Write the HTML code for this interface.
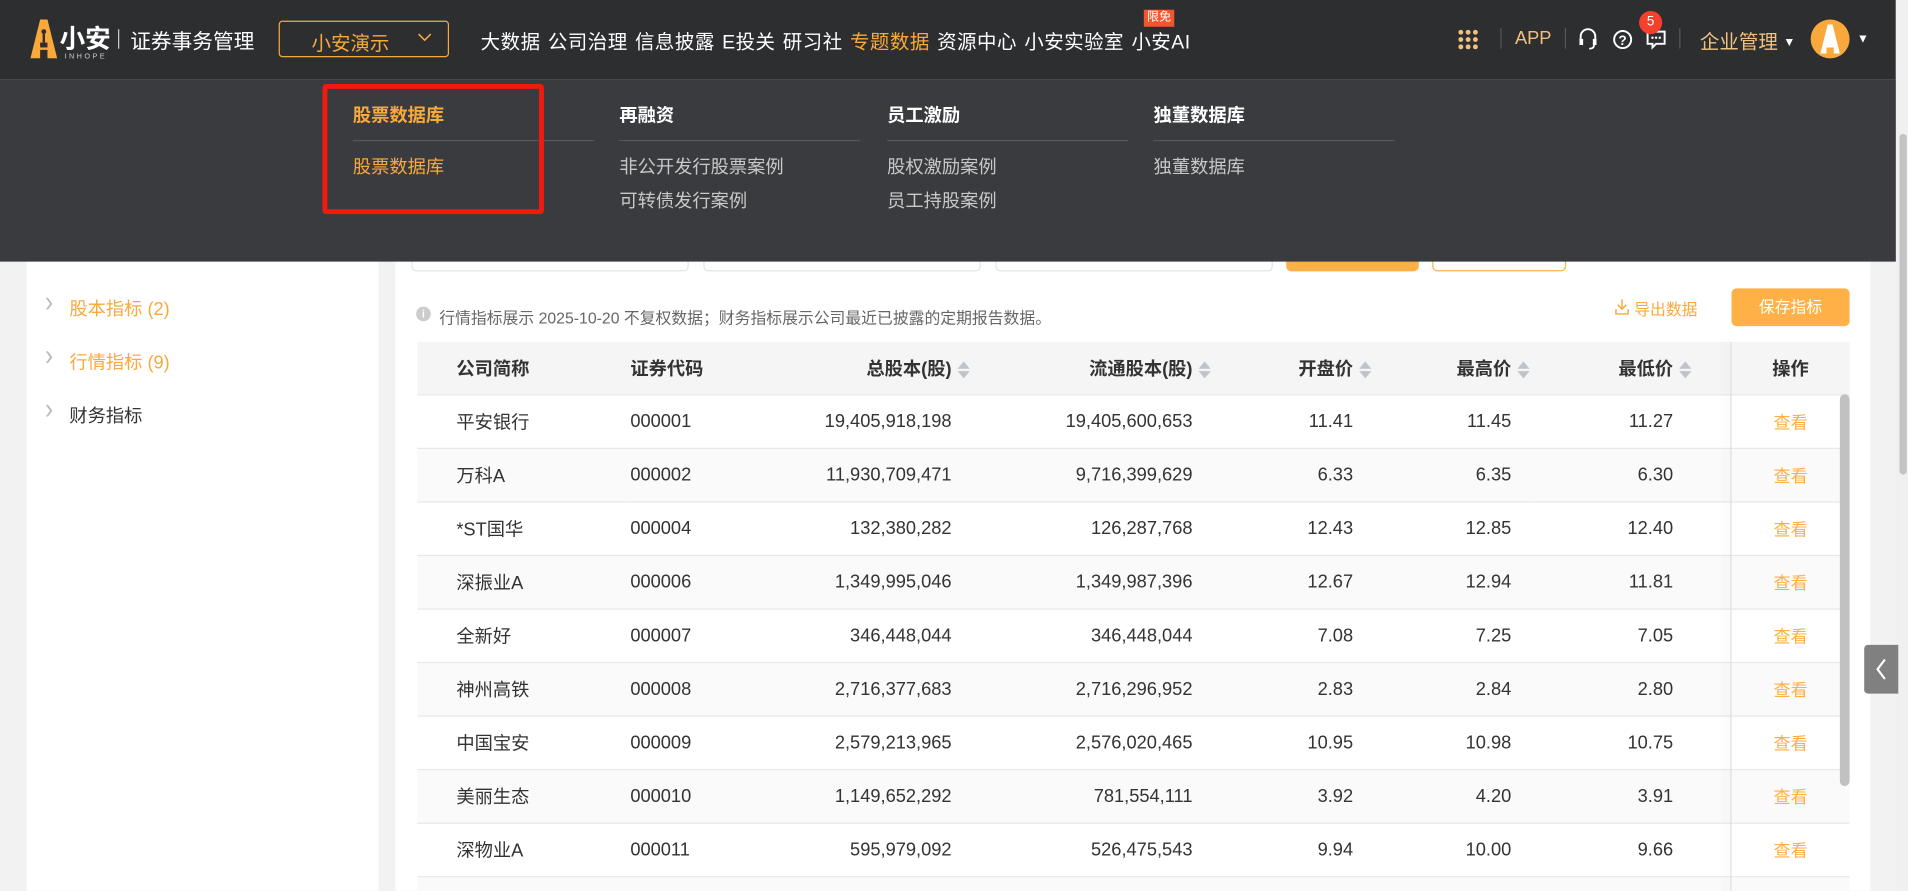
<!DOCTYPE html>
<html><head><meta charset="utf-8">
<style>
html,body{margin:0;padding:0;width:1908px;height:891px;overflow:hidden;background:#f2f2f2;}
#w{position:absolute;left:0;top:0;width:1568px;height:732px;transform:scale(1.216837);transform-origin:0 0;font-family:"Liberation Sans","Noto Sans CJK SC",sans-serif;background:#f2f2f2;overflow:hidden;}
.a{position:absolute;white-space:nowrap;}
.nav{left:0;top:0;width:1558px;height:65px;background:#2d2e30;}
.menu span{margin-right:6px;}
.drop{left:0;top:65px;width:1558px;height:150px;background:#3a3b3f;}
.dh{font-size:15px;font-weight:bold;color:#fff;}
.di{font-size:15px;color:#c8c8c8;}
.ln{height:1px;background:#55565a;width:198px;}
table{border-collapse:collapse;font-size:15px;color:#333;table-layout:fixed;}
td,th{height:43px;padding:0;border-bottom:1px solid #e8e8e8;}
th{font-weight:bold;background:#f5f5f5;}
th.r{padding-right:3px;}
td.r{padding-right:18px;}
tr:nth-child(odd) td{background:#fafafa;}
.sort{display:inline-block;vertical-align:middle;margin-left:5px;width:10px;height:16px;position:relative;}
.sort:before{content:"";position:absolute;left:0;top:1px;border-left:5px solid transparent;border-right:5px solid transparent;border-bottom:6px solid #bfc3cb;}
.sort:after{content:"";position:absolute;left:0;top:9px;border-left:5px solid transparent;border-right:5px solid transparent;border-top:6px solid #bfc3cb;}
.r{text-align:right;}
.op{color:#ffae42;text-align:center;font-size:14px;}
.chev{font-size:20px;color:#bbb;transform:scaleY(1.2);}
</style></head><body><div id="w">
<div class="a nav"></div>
<svg class="a" style="left:25px;top:16px" width="22" height="32" viewBox="0 0 22 32"><path d="M8 0h6l8 32H14v-7H8v7H0z" fill="#f9a93b"/><circle cx="11" cy="10" r="2" fill="#2d2e30"/><rect x="10" y="12" width="2" height="7" fill="#2d2e30"/><rect x="8" y="19" width="6" height="4" fill="#2d2e30"/></svg>
<div class="a" style="left:49px;top:16px;font-size:21px;color:#fff;font-weight:bold">小安</div>
<div class="a" style="left:53px;top:44px;font-size:6px;color:#ccc;letter-spacing:2px">INHOPE</div>
<div class="a" style="left:97px;top:24px;width:1px;height:16px;background:#ccc"></div>
<div class="a" style="left:107px;top:20px;font-size:17px;color:#fff">证券事务管理</div>
<div class="a" style="left:229px;top:17px;width:140px;height:30px;border:1px solid #f9a93b;border-radius:3px;box-sizing:border-box"></div>
<div class="a" style="left:256px;top:22px;font-size:16px;color:#f9a93b">小安演示</div>
<svg class="a" style="left:343px;top:27px" width="12" height="8"><path d="M1 1l5 5 5-5" fill="none" stroke="#f9a93b" stroke-width="1.3"/></svg>
<div class="a menu" style="left:395px;top:21px;font-size:16px;color:#fff;letter-spacing:0.4px"><span>大数据</span><span>公司治理</span><span>信息披露</span><span>E投关</span><span>研习社</span><span style="color:#f9a93b">专题数据</span><span>资源中心</span><span>小安实验室</span><span>小安AI</span></div>
<div class="a" style="left:940px;top:8px;width:25px;height:14px;background:#f4552c;color:#fff;font-size:10px;text-align:center;line-height:14px">限免</div>
<svg class="a" style="left:1198px;top:24px" width="17" height="17"><g fill="#f0c080"><circle cx="2.5" cy="2.5" r="2"/><circle cx="8.5" cy="2.5" r="2"/><circle cx="14.5" cy="2.5" r="2"/><circle cx="2.5" cy="8.5" r="2"/><circle cx="8.5" cy="8.5" r="2"/><circle cx="14.5" cy="8.5" r="2"/><circle cx="2.5" cy="14.5" r="2"/><circle cx="8.5" cy="14.5" r="2"/><circle cx="14.5" cy="14.5" r="2"/></g></svg>
<div class="a" style="left:1233px;top:23px;width:1px;height:17px;background:#555"></div>
<div class="a" style="left:1245px;top:23px;font-size:15px;color:#f0c080">APP</div>
<div class="a" style="left:1286px;top:23px;width:1px;height:17px;background:#555"></div>
<svg class="a" style="left:1296px;top:22px" width="18" height="20"><path d="M3 11V8a6 6 0 0 1 12 0v3" fill="none" stroke="#fff" stroke-width="1.6"/><rect x="2" y="10" width="3" height="5" fill="#fff"/><rect x="13" y="10" width="3" height="5" fill="#fff"/><path d="M14 15q0 3-4 3" fill="none" stroke="#fff" stroke-width="1.4"/></svg>
<svg class="a" style="left:1325px;top:24px" width="17" height="17"><circle cx="8.5" cy="8.5" r="7" fill="none" stroke="#fff" stroke-width="1.6"/><text x="8.5" y="13" font-size="11" font-weight="bold" fill="#fff" text-anchor="middle" font-family="Liberation Sans">?</text></svg>
<svg class="a" style="left:1352px;top:24px" width="18" height="17"><path d="M2 2h14v10H9l-3 3v-3H2z" fill="none" stroke="#fff" stroke-width="1.6"/><g fill="#fff"><circle cx="6" cy="7" r="1"/><circle cx="9" cy="7" r="1"/><circle cx="12" cy="7" r="1"/></g></svg>
<div class="a" style="left:1347px;top:9px;width:19px;height:19px;border-radius:50%;background:#f4402c;color:#fff;font-size:11px;text-align:center;line-height:19px">5</div>
<div class="a" style="left:1380px;top:23px;width:1px;height:17px;background:#555"></div>
<div class="a" style="left:1397px;top:21px;font-size:16px;color:#f0c080">企业管理 <span style="font-size:10px;color:#fff;vertical-align:2px">▼</span></div>
<div class="a" style="left:1488px;top:16px;width:32px;height:32px;border-radius:50%;background:#f9a93b"></div>
<svg class="a" style="left:1496px;top:20px" width="16" height="24"><path d="M6 0h4l6 24h-5v-5H5v5H0z" fill="#fff"/></svg>
<div class="a" style="left:1526px;top:27px;font-size:10px;color:#fff">▼</div>
<div class="a" style="left:1558px;top:0;width:10px;height:732px;background:#f0f0f0"></div>
<div class="a" style="left:1561px;top:110px;width:6px;height:280px;background:#c4c4c4;border-radius:3px"></div>

<div class="a" style="left:22px;top:200px;width:289px;height:540px;background:#fff"></div>
<div class="a chev" style="left:37px;top:238px">›</div><div class="a" style="left:57px;top:243px;font-size:15px;color:#f9a93b">股本指标 (2)</div>
<div class="a chev" style="left:37px;top:282px">›</div><div class="a" style="left:57px;top:287px;font-size:15px;color:#f9a93b">行情指标 (9)</div>
<div class="a chev" style="left:37px;top:326px">›</div><div class="a" style="left:57px;top:331px;font-size:15px;color:#333">财务指标</div>

<div class="a" style="left:325px;top:200px;width:1212px;height:540px;background:#fff"></div>
<div class="a" style="left:338px;top:200px;width:228px;height:23px;border:1px solid #e4e4e4;border-radius:4px;box-sizing:border-box"></div>
<div class="a" style="left:578px;top:200px;width:228px;height:23px;border:1px solid #e4e4e4;border-radius:4px;box-sizing:border-box"></div>
<div class="a" style="left:818px;top:200px;width:228px;height:23px;border:1px solid #e4e4e4;border-radius:4px;box-sizing:border-box"></div>
<div class="a" style="left:1057px;top:200px;width:109px;height:23px;background:#ffb047;border-radius:4px"></div>
<div class="a" style="left:1177px;top:200px;width:110px;height:23px;border:1px solid #ffb047;border-radius:4px;box-sizing:border-box"></div>
<div class="a" style="left:342px;top:252px;width:12px;height:12px;border-radius:50%;background:#ccc;color:#fff;font-size:9px;text-align:center;line-height:12px;font-weight:bold">i</div>
<div class="a" style="left:361px;top:251px;font-size:13px;color:#666">行情指标展示 2025-10-20 不复权数据；财务指标展示公司最近已披露的定期报告数据。</div>
<svg class="a" style="left:1327px;top:245px" width="12" height="14"><path d="M6 1v8M2.5 5.5L6 9l3.5-3.5M1 9v4h10V9" fill="none" stroke="#f9a93b" stroke-width="1.2"/></svg>
<div class="a" style="left:1343px;top:244px;font-size:13px;color:#f9a93b">导出数据</div>
<div class="a" style="left:1423px;top:237px;width:97px;height:31px;background:#ffb047;border-radius:4px;color:#fff;font-size:13px;text-align:center;line-height:31px">保存指标</div>

<table class="a" style="left:343px;top:281px;width:1177px">
<colgroup><col style="width:175px"><col style="width:112px"><col style="width:170px"><col style="width:198px"><col style="width:132px"><col style="width:130px"><col style="width:133px"><col style="width:30px"><col style="width:97px"></colgroup>
<tr><th style="text-align:left;padding-left:32px">公司简称</th><th style="text-align:left">证券代码</th><th class="r">总股本(股)<span class="sort"></span></th><th class="r">流通股本(股)<span class="sort"></span></th><th class="r">开盘价<span class="sort"></span></th><th class="r">最高价<span class="sort"></span></th><th class="r">最低价<span class="sort"></span></th><th></th><th>操作</th></tr>
<tr><td style="padding-left:32px">平安银行</td><td>000001</td><td class="r">19,405,918,198</td><td class="r">19,405,600,653</td><td class="r">11.41</td><td class="r">11.45</td><td class="r">11.27</td><td></td><td class="op">查看</td></tr>
<tr><td style="padding-left:32px">万科A</td><td>000002</td><td class="r">11,930,709,471</td><td class="r">9,716,399,629</td><td class="r">6.33</td><td class="r">6.35</td><td class="r">6.30</td><td></td><td class="op">查看</td></tr>
<tr><td style="padding-left:32px">*ST国华</td><td>000004</td><td class="r">132,380,282</td><td class="r">126,287,768</td><td class="r">12.43</td><td class="r">12.85</td><td class="r">12.40</td><td></td><td class="op">查看</td></tr>
<tr><td style="padding-left:32px">深振业A</td><td>000006</td><td class="r">1,349,995,046</td><td class="r">1,349,987,396</td><td class="r">12.67</td><td class="r">12.94</td><td class="r">11.81</td><td></td><td class="op">查看</td></tr>
<tr><td style="padding-left:32px">全新好</td><td>000007</td><td class="r">346,448,044</td><td class="r">346,448,044</td><td class="r">7.08</td><td class="r">7.25</td><td class="r">7.05</td><td></td><td class="op">查看</td></tr>
<tr><td style="padding-left:32px">神州高铁</td><td>000008</td><td class="r">2,716,377,683</td><td class="r">2,716,296,952</td><td class="r">2.83</td><td class="r">2.84</td><td class="r">2.80</td><td></td><td class="op">查看</td></tr>
<tr><td style="padding-left:32px">中国宝安</td><td>000009</td><td class="r">2,579,213,965</td><td class="r">2,576,020,465</td><td class="r">10.95</td><td class="r">10.98</td><td class="r">10.75</td><td></td><td class="op">查看</td></tr>
<tr><td style="padding-left:32px">美丽生态</td><td>000010</td><td class="r">1,149,652,292</td><td class="r">781,554,111</td><td class="r">3.92</td><td class="r">4.20</td><td class="r">3.91</td><td></td><td class="op">查看</td></tr>
<tr><td style="padding-left:32px">深物业A</td><td>000011</td><td class="r">595,979,092</td><td class="r">526,475,543</td><td class="r">9.94</td><td class="r">10.00</td><td class="r">9.66</td><td></td><td class="op">查看</td></tr>
<tr><td colspan="9"></td></tr>
</table>
<div class="a" style="left:1422px;top:281px;width:1px;height:460px;background:#e0e0e0;box-shadow:-3px 0 6px rgba(0,0,0,.12)"></div>
<div class="a" style="left:1512px;top:324px;width:8px;height:322px;background:#c1c1c1;border-radius:4px"></div>
<div class="a" style="left:1532px;top:530px;width:28px;height:40px;background:#808080;border-radius:3px 0 0 3px"></div>
<svg class="a" style="left:1540px;top:540px" width="12" height="20"><path d="M9 2L3 10l6 8" fill="none" stroke="#fff" stroke-width="1.8"/></svg>

<div class="a drop"></div>
<div class="a dh" style="left:290px;top:84px;color:#f9a93b">股票数据库</div>
<div class="a ln" style="left:290px;top:115px"></div>
<div class="a di" style="left:290px;top:126px;color:#f9a93b">股票数据库</div>
<div class="a dh" style="left:509px;top:84px">再融资</div>
<div class="a ln" style="left:509px;top:115px"></div>
<div class="a di" style="left:509px;top:126px">非公开发行股票案例</div>
<div class="a di" style="left:509px;top:154px">可转债发行案例</div>
<div class="a dh" style="left:729px;top:84px">员工激励</div>
<div class="a ln" style="left:729px;top:115px"></div>
<div class="a di" style="left:729px;top:126px">股权激励案例</div>
<div class="a di" style="left:729px;top:154px">员工持股案例</div>
<div class="a dh" style="left:948px;top:84px">独董数据库</div>
<div class="a ln" style="left:948px;top:115px"></div>
<div class="a di" style="left:948px;top:126px">独董数据库</div>
<div class="a" style="left:265px;top:69px;width:182px;height:107px;border:4px solid #f21a0c;border-radius:3px;box-sizing:border-box"></div>
</div></body></html>
